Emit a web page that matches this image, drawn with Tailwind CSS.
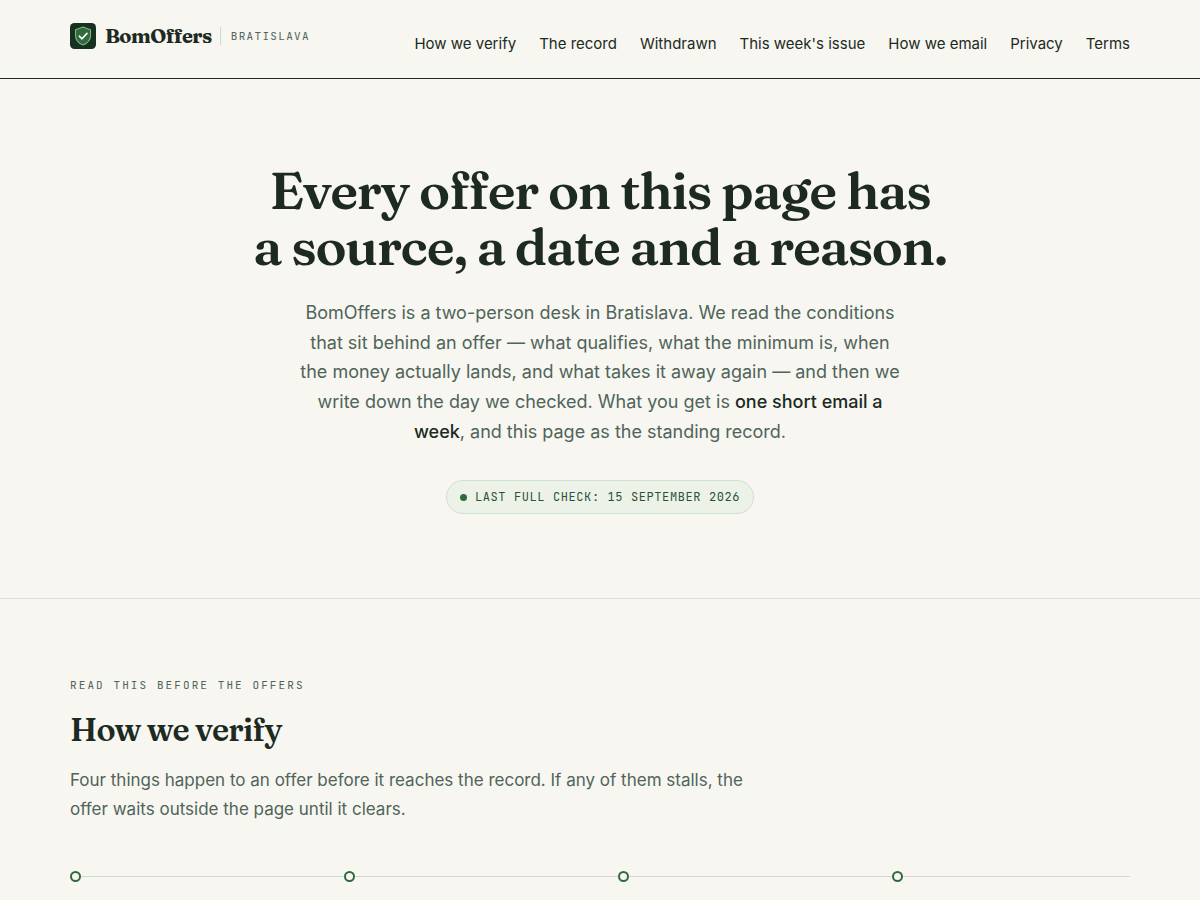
<!DOCTYPE html>
<html lang="en">
<head>
  <meta charset="UTF-8">
  <meta name="viewport" content="width=device-width, initial-scale=1.0">
  <title>BomOffers - Bratislava</title>
  <script src="https://cdn.jsdelivr.net/npm/@tailwindcss/browser@4"></script>
</head>
<body class="min-h-screen overflow-x-hidden bg-[#f7f6f1] font-['Inter',sans-serif] text-[#1c2a22]">

  <!-- Header -->
  <header class="border-b border-[#1c2a22]">
    <div class="mx-auto flex max-w-[1108px] items-start justify-between px-6 pt-[23px] pb-[22px]">
      <a href="#" class="flex items-center">
        <svg class="mr-[9px] size-[26px]" viewBox="0 0 26 26" fill="none" aria-hidden="true">
          <rect width="26" height="26" rx="4.5" fill="#17301f"/>
          <path d="M13 4 L20.5 6.7 V12.4 C20.5 17 17.4 20.2 13 22 C8.6 20.2 5.5 17 5.5 12.4 V6.7 Z" fill="#2f6b3d" stroke="#7fb08a" stroke-width="1.1" stroke-linejoin="round"/>
          <path d="M9.3 13.2 L12 15.8 L17 10.4" stroke="#fff" stroke-width="1.6" stroke-linecap="round" stroke-linejoin="round"/>
        </svg>
        <span class="font-['Fraunces','Liberation_Serif',serif] text-xl leading-[26px] font-bold tracking-tight">BomOffers</span>
        <span class="ml-2 border-l border-[#cfdad0] pl-[10px] font-['JetBrains_Mono','DejaVu_Sans_Mono',monospace] text-[11px] leading-[18px] tracking-[0.12em] text-[#50645a]">BRATISLAVA</span>
      </a>
      <nav class="flex gap-[23px] pt-[9px] text-[15px] leading-6">
        <a href="#verify">How we verify</a>
        <a href="#record">The record</a>
        <a href="#withdrawn">Withdrawn</a>
        <a href="#issue">This week's issue</a>
        <a href="#email">How we email</a>
        <a href="#privacy">Privacy</a>
        <a href="#terms">Terms</a>
      </nav>
    </div>
  </header>

  <main>
    <!-- Hero -->
    <section class="border-b border-[#d9dfd7] px-6 pt-[83px] pb-[84px] text-center">
      <h1 class="font-['Fraunces','Liberation_Serif',serif] text-[52px] leading-[56px] font-semibold tracking-tight">Every offer on this page has<br>a source, a date and a reason.</h1>
      <p class="mx-auto mt-6 max-w-[604px] text-lg leading-[1.65] text-[#50645a]">BomOffers is a two-person desk in Bratislava. We read the conditions that sit behind an offer — what qualifies, what the minimum is, when the money actually lands, and what takes it away again — and then we write down the day we checked. What you get is <strong class="font-medium text-[#1c2a22]">one short email a week</strong>, and this page as the standing record.</p>
      <p class="mt-[34px] inline-flex h-[34px] items-center gap-2 rounded-full border border-[#cfdfd1] bg-[#edf2e9] px-[13px] font-['JetBrains_Mono','DejaVu_Sans_Mono',monospace] text-xs tracking-[0.05em] text-[#2a5238]">
        <span class="size-[7px] rounded-full bg-[#2f6b3d]"></span>LAST FULL CHECK: 15 SEPTEMBER 2026
      </p>
    </section>

    <!-- How we verify -->
    <section id="verify" class="mx-auto max-w-[1108px] px-6 pt-[76px]">
      <p class="font-['JetBrains_Mono','DejaVu_Sans_Mono',monospace] text-[11px] leading-5 tracking-[0.19em] text-[#50645a]">READ THIS BEFORE THE OFFERS</p>
      <h2 class="mt-[15px] font-['Fraunces','Liberation_Serif',serif] text-[32px] leading-10 font-semibold tracking-tight">How we verify</h2>
      <p class="mt-4 max-w-[700px] text-[17px] leading-[29px] text-[#50645a]">Four things happen to an offer before it reaches the record. If any of them stalls, the offer waits outside the page until it clears.</p>
      <ol class="mt-[47px] grid grid-cols-4 gap-9">
        <li class="flex items-center"><span class="size-[11px] rounded-full border-2 border-[#2f6b3d]"></span><span class="-mr-9 h-px flex-1 bg-[#cfdad0]"></span></li>
        <li class="flex items-center"><span class="size-[11px] rounded-full border-2 border-[#2f6b3d]"></span><span class="-mr-9 h-px flex-1 bg-[#cfdad0]"></span></li>
        <li class="flex items-center"><span class="size-[11px] rounded-full border-2 border-[#2f6b3d]"></span><span class="-mr-9 h-px flex-1 bg-[#cfdad0]"></span></li>
        <li class="flex items-center"><span class="size-[11px] rounded-full border-2 border-[#2f6b3d]"></span><span class="h-px flex-1 bg-[#cfdad0]"></span></li>
      </ol>
    </section>
  </main>

</body>
</html>
